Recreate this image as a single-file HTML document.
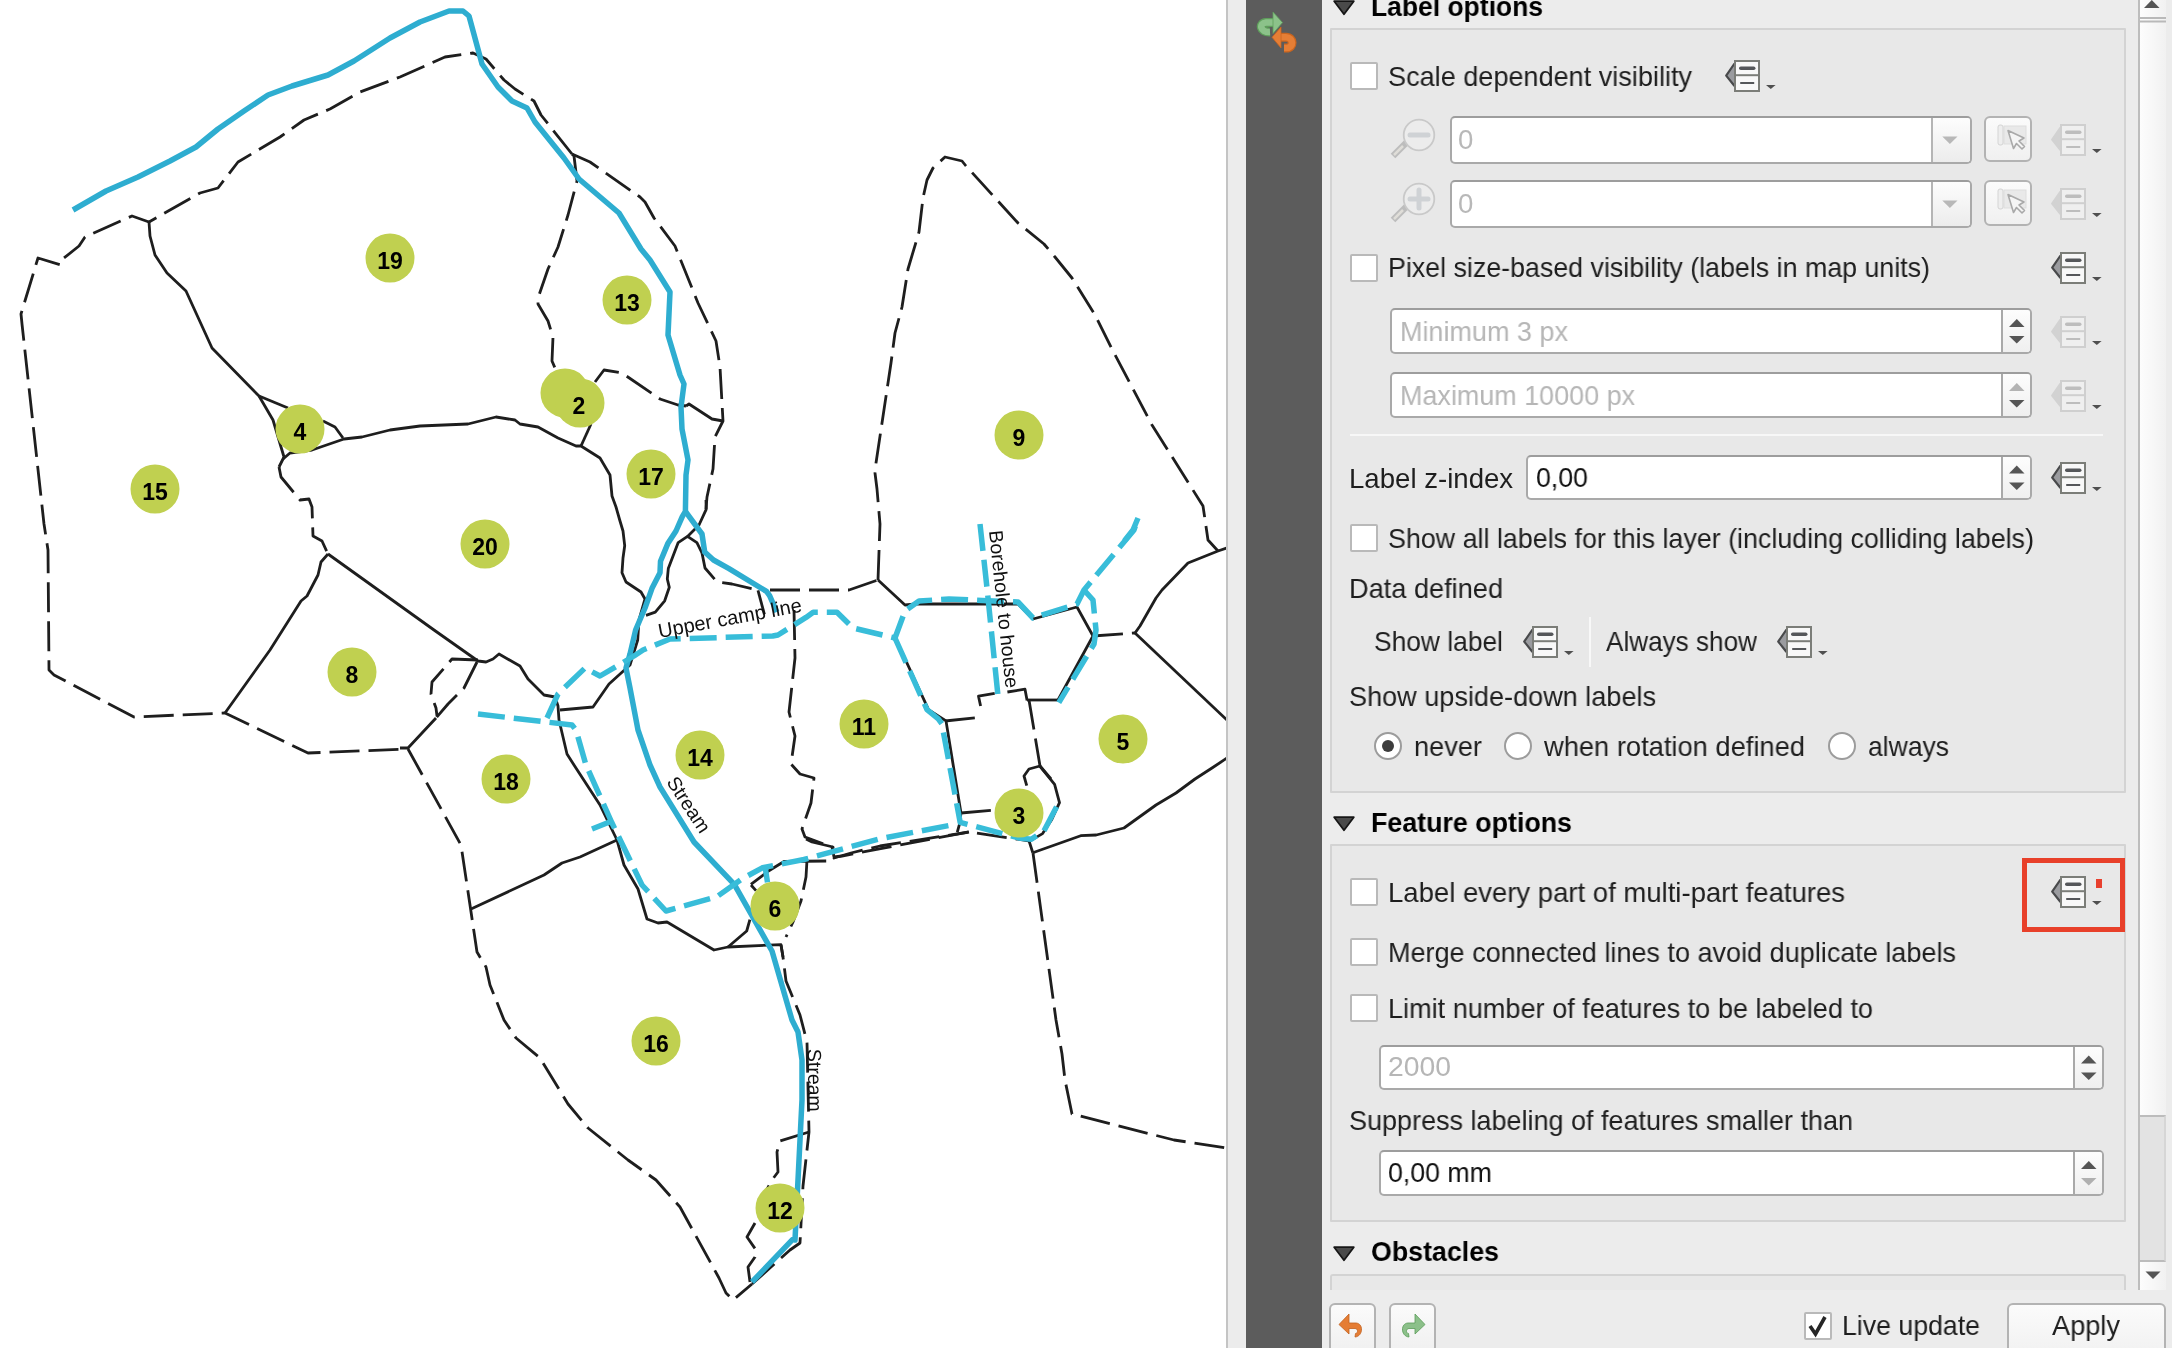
<!DOCTYPE html>
<html><head><meta charset="utf-8">
<style>
html,body{margin:0;padding:0;}
body{width:2172px;height:1348px;overflow:hidden;position:relative;background:#fff;font-family:"Liberation Sans",sans-serif;}
.t{position:absolute;white-space:nowrap;color:#1e1e1e;will-change:transform;}
.b{font-weight:bold;}
</style></head><body>
<div style="position:absolute;left:0;top:0;width:1226px;height:1348px;overflow:hidden;background:#fff">
<svg width="1226" height="1348" viewBox="0 0 1226 1348" style="position:absolute;left:0;top:0;will-change:transform">
<g fill="none" stroke="#1e1e1e" stroke-width="2.8" stroke-linejoin="round" stroke-dasharray="30 9">
<polyline points="572.0,154.0 541.0,115.0 534.0,101.0 515.0,89.0 504.0,80.0 486.0,59.0 473.0,53.0 445.0,57.0 400.0,77.0 360.0,92.0 330.0,109.0 304.0,120.0 280.0,137.0 238.0,162.0 218.0,188.0 200.0,193.0 149.0,222.0 132.0,216.0 85.0,237.0 79.0,246.0 64.0,258.0 61.0,265.0 38.0,258.0 21.0,314.0 22.0,324.0 44.0,524.0 48.0,550.0 49.0,670.0 54.0,675.0 134.0,717.0 225.0,713.0 308.0,753.0 408.0,749.0 461.0,845.0 470.0,905.0 477.0,952.0 486.0,967.0 490.0,985.0 504.0,1020.0 516.0,1038.0 540.0,1058.0 568.0,1104.0 588.0,1128.0 628.0,1160.0 656.0,1180.0 680.0,1207.0 719.0,1278.0 726.0,1293.0 733.0,1300.0 752.0,1284.0"/>
<polyline points="752.0,1284.0 790.0,1250.0 800.0,1243.0 803.0,1186.0 809.0,1132.0 807.0,1042.0 800.0,1015.0 786.0,981.0 783.0,957.0 781.0,945.0"/>
<polyline points="809.0,1132.0 780.0,1141.0 777.0,1152.0 778.0,1172.0 772.0,1180.0 764.0,1195.0"/>
<polyline points="755.0,1223.0 747.0,1237.0 756.0,1250.0 755.0,1257.0 748.0,1267.0 750.0,1282.0"/>
<polyline points="572.0,154.0 574.0,156.0 577.0,181.0 568.0,215.0 558.0,247.0 548.0,269.0 538.0,298.0 538.0,304.0 548.0,321.0 553.0,337.0 552.0,361.0 555.0,368.0 560.0,370.0"/>
<polyline points="572.0,154.0 590.0,162.0 640.0,197.0 645.0,202.0 654.0,218.0 675.0,246.0 698.0,303.0 716.0,341.0 720.0,367.0 723.0,421.0 715.0,437.0 713.0,469.0 707.0,497.0 706.0,509.0"/>
<polyline points="595.0,382.0 604.0,370.0 622.0,373.0 660.0,399.0 678.0,405.0 686.0,406.0"/>
<polyline points="878.0,580.0 880.0,524.0 877.0,489.0 875.0,473.0 876.0,463.0 891.0,363.0 895.0,333.0 902.0,307.0 908.0,269.0 919.0,232.0 923.0,198.0 927.0,180.0 933.0,168.0 945.0,157.0 962.0,161.0 966.0,166.0 1018.0,223.0 1044.0,244.0 1055.0,257.0 1072.0,278.0 1095.0,315.0 1112.0,349.0 1152.0,425.0 1203.0,506.0 1208.0,540.0 1218.0,551.0"/>
<polyline points="770.0,590.0 849.0,590.0 878.0,580.0"/>
<polyline points="702.0,553.0 705.0,568.0 717.0,582.0 732.0,584.0 758.0,590.0"/>
<polyline points="794.0,610.0 795.0,658.0 789.0,712.0 795.0,736.0 791.0,764.0 800.0,774.0 814.0,778.0 811.0,803.0 802.0,829.0 805.0,837.0 832.0,847.0 834.0,857.0 842.0,856.0 969.0,832.0 1030.0,841.0"/>
<polyline points="807.0,860.0 806.0,877.0 801.0,901.0 793.0,922.0 786.0,937.0"/>
<polyline points="1033.0,853.0 1056.0,1020.0 1062.0,1054.0 1065.0,1080.0 1072.0,1114.0 1174.0,1140.0 1227.0,1148.0"/>
<polyline points="478.0,660.0 452.0,659.0 432.0,682.0 431.0,694.0 436.0,708.0 437.0,716.0"/>
<polyline points="477.0,662.0 464.0,688.0 448.0,704.0 436.0,718.0"/>
<polyline points="279.0,467.0 281.0,477.0 300.0,500.0 309.0,499.0 312.0,507.0 313.0,536.0 322.0,541.0 328.0,554.0"/>
<polyline points="945.0,721.0 983.0,717.0"/>
<polyline points="961.0,813.0 995.0,810.0"/>
<polyline points="1027.0,700.0 1057.0,700.0"/>
<polyline points="1093.0,636.0 1135.0,633.0"/>
<polyline points="1040.0,766.0 1029.0,769.0 1024.0,776.0 1028.0,790.0"/>
<polyline points="1029.0,700.0 1040.0,766.0"/>
<polyline points="806.0,839.0 812.0,842.0 833.0,847.0 834.0,858.0 851.0,853.0 880.0,846.0 969.0,832.0"/>
</g>
<g fill="none" stroke="#1e1e1e" stroke-width="2.8" stroke-linejoin="round">
<polyline points="149.0,222.0 150.0,236.0 155.0,255.0 167.0,273.0 186.0,291.0 212.0,348.0 259.0,396.0 273.0,420.0 284.0,457.0 279.0,467.0"/>
<polyline points="259.0,396.0 288.0,408.0"/>
<polyline points="323.0,421.0 335.0,427.0 343.0,438.0"/>
<polyline points="283.0,459.0 290.0,453.0 312.0,450.0 344.0,439.0 362.0,437.0 390.0,430.0 420.0,426.0 468.0,424.0 496.0,417.0 515.0,420.0 520.0,424.0 538.0,427.0 558.0,438.0 576.0,446.0 581.0,446.0 600.0,458.0 610.0,475.0 612.0,496.0 616.0,507.0 620.0,521.0 623.0,531.0 624.7,545.7 623.0,558.0 622.0,572.7 626.0,582.0 641.0,592.0 645.0,599.0 639.0,620.0 637.7,640.0 630.0,665.0 609.0,684.0 593.0,707.0 560.0,710.0"/>
<polyline points="581.0,446.0 591.0,424.0"/>
<polyline points="328.0,554.0 434.0,630.0 478.0,661.0 486.0,662.0 493.0,659.0 499.0,654.0 520.0,666.0 528.0,679.0 544.0,695.0 555.0,697.0"/>
<polyline points="328.0,554.0 321.0,562.0 318.0,575.0 307.0,596.0 301.0,601.0 270.0,650.0 225.0,713.0"/>
<polyline points="555.0,697.0 558.0,706.0 559.0,720.0 567.0,754.0 574.0,765.0 600.0,805.0 617.0,840.0 624.0,865.0 638.0,889.0 647.0,919.0 658.0,923.0 667.0,922.0 714.0,950.0 728.0,947.0 781.0,944.6 783.0,957.0"/>
<polyline points="728.0,947.0 746.7,931.0 749.9,919.7"/>
<polyline points="646.0,615.3 655.3,612.2 664.7,600.8 669.3,587.3 667.3,579.0 668.3,568.6 678.2,542.6 687.5,536.4 696.9,542.6 702.0,553.0"/>
<polyline points="687.5,536.4 699.0,525.0 706.2,509.3 706.0,500.0"/>
<polyline points="758.0,590.4 764.4,614.3"/>
<polyline points="686.0,406.0 689.0,404.0 712.0,419.0 723.0,421.0"/>
<polyline points="471.0,909.0 544.0,875.0 562.0,863.0 580.0,857.0 617.0,840.0"/>
<polyline points="436.0,718.0 408.0,748.0 400.0,748.0"/>
<polyline points="878.0,580.0 905.0,605.0 916.0,604.0 1018.0,604.0 1033.0,619.0 1077.0,607.0 1093.0,636.0 1058.0,700.0 1057.0,700.0"/>
<polyline points="1135.0,633.0 1140.0,626.0 1156.0,598.0 1162.0,590.0 1188.0,563.0 1218.0,551.0 1227.0,548.0"/>
<polyline points="1135.0,633.0 1227.0,720.0"/>
<polyline points="894.0,635.0 928.5,709.6 946.0,720.9 960.9,812.5 960.2,821.6 957.3,832.2"/>
<polyline points="980.6,706.0 978.5,696.2 994.7,693.4"/>
<polyline points="1007.4,692.0 1025.0,689.2 1027.1,700.4"/>
<polyline points="1039.8,766.0 1054.6,784.3 1059.5,802.6 1051.8,819.5 1042.6,833.6 1029.2,841.4 1032.8,852.7"/>
<polyline points="1032.8,852.7 1080.7,835.7 1096.2,835.0 1124.0,828.0 1156.0,805.0 1176.0,793.0 1195.0,779.0 1212.0,768.0 1227.0,758.0"/>
<polyline points="751.0,885.0 756.0,890.6"/>
<polyline points="750.9,884.4 768.5,871.0 784.0,861.5 826.2,861.0"/>
<polyline points="1040.0,766.0 1051.0,779.0"/>
</g>
<g fill="none" stroke="#2eadd0" stroke-width="5.5" stroke-linejoin="round">
<polyline points="73.0,210.0 106.0,191.0 138.0,177.0 170.0,161.0 196.0,147.0 218.0,129.0 244.0,111.0 268.0,95.0 292.0,86.0 328.0,75.0 354.0,61.0 390.0,38.0 420.0,22.0 449.0,11.0 463.0,11.0 469.0,16.0 482.0,64.0 498.0,87.0 512.0,101.0 527.0,108.0 535.0,122.0 564.0,158.0 579.0,179.0 619.0,213.0 641.0,249.0 650.0,260.0 670.0,292.0 668.0,335.0 680.0,375.0 684.0,384.0 681.0,407.0 682.0,429.0 688.0,460.0 686.0,475.0 685.4,511.4 682.3,516.6 676.0,531.0 667.8,543.6 660.5,561.3 660.0,572.7 652.0,588.3 645.0,608.0 635.6,630.0 630.0,654.0 626.0,668.0 630.0,688.0 638.0,730.0 650.0,765.0 660.0,787.0 694.0,842.0 734.3,884.4 772.0,951.0 792.0,1020.0 798.0,1032.0 802.0,1060.0 802.0,1100.0 795.0,1240.0 792.7,1239.4 752.0,1282.0"/>
<polyline points="685.4,511.4 702.0,534.0 704.7,552.0 713.5,560.0 729.0,568.6 766.5,591.4 769.6,595.6 776.8,612.0"/>
</g>
<g fill="none" stroke="#38bdd9" stroke-width="5.5" stroke-linejoin="round" stroke-dasharray="27 9">
<polyline points="547.0,718.0 558.0,694.0 585.0,668.0 600.0,676.0 634.0,656.0 643.0,650.0 670.0,639.0 772.7,636.0 778.0,635.0 806.0,617.4 813.2,612.2 837.0,612.2 853.0,628.0 895.0,638.0 905.0,611.0 919.0,601.0 949.0,599.0 1018.0,602.0 1033.0,618.0 1077.0,604.0 1084.0,590.0 1134.0,530.0 1138.0,518.0"/>
<polyline points="1084.0,590.0 1093.0,600.0 1096.0,630.0 1094.0,644.0 1058.8,702.6"/>
<polyline points="895.0,638.0 927.0,709.6 938.3,718.8 941.8,723.7 960.2,822.4 1018.7,837.9 1031.3,839.3 1044.0,830.8 1058.8,802.6"/>
<polyline points="980.0,524.0 987.0,588.0 998.0,696.0"/>
<polyline points="478.0,714.0 572.0,725.0 576.0,730.0 586.0,765.0 612.0,823.0 642.0,885.0 666.0,911.0 716.6,896.9 741.5,879.2 762.3,867.8 803.9,859.5 880.0,838.7 957.0,824.0"/>
<polyline points="592.0,829.0 612.0,821.0"/>
<polyline points="1138.0,518.0 1133.0,530.0 1122.0,544.0"/>
<polyline points="765.4,868.8 767.5,882.3"/>
</g>
<g font-family="Liberation Sans, sans-serif" font-size="19.5" fill="#111">
<text transform="translate(659.5,638) rotate(-10.5)" font-size="20">Upper camp line</text>
<text transform="translate(989,531) rotate(84)">Borehole to house</text>
<text transform="translate(666,782) rotate(57)">Stream</text>
<text transform="translate(807.5,1049) rotate(89)">Stream</text>
</g>
<g fill="#c0d050">
<circle cx="565" cy="393" r="24.5"/><circle cx="580" cy="403" r="24.5"/>
<circle cx="390" cy="258" r="24.5"/>
<circle cx="627" cy="300" r="24.5"/>
<circle cx="300" cy="429" r="24.5"/>
<circle cx="155" cy="489" r="24.5"/>
<circle cx="485" cy="544" r="24.5"/>
<circle cx="651" cy="474" r="24.5"/>
<circle cx="1019" cy="435" r="24.5"/>
<circle cx="352" cy="672" r="24.5"/>
<circle cx="864" cy="724" r="24.5"/>
<circle cx="1123" cy="739" r="24.5"/>
<circle cx="700" cy="755" r="24.5"/>
<circle cx="506" cy="779" r="24.5"/>
<circle cx="1019" cy="813" r="24.5"/>
<circle cx="775" cy="906" r="24.5"/>
<circle cx="656" cy="1041" r="24.5"/>
<circle cx="780" cy="1208" r="24.5"/>
</g>
<g font-family="Liberation Sans, sans-serif" font-size="23" font-weight="bold" fill="#000" text-anchor="middle">
<text x="390" y="268.5">19</text>
<text x="627" y="310.5">13</text>
<text x="300" y="439.5">4</text>
<text x="155" y="499.5">15</text>
<text x="485" y="554.5">20</text>
<text x="651" y="484.5">17</text>
<text x="1019" y="445.5">9</text>
<text x="352" y="682.5">8</text>
<text x="864" y="734.5">11</text>
<text x="1123" y="749.5">5</text>
<text x="700" y="765.5">14</text>
<text x="506" y="789.5">18</text>
<text x="1019" y="823.5">3</text>
<text x="775" y="916.5">6</text>
<text x="656" y="1051.5">16</text>
<text x="780" y="1218.5">12</text>
<text x="579" y="414">2</text>
</g>
</svg>
</div>
<div style="position:absolute;left:1226px;top:0px;width:2px;height:1348px;box-sizing:border-box;background:#c4c4c4;"></div>
<div style="position:absolute;left:1228px;top:0px;width:18px;height:1348px;box-sizing:border-box;background:#ececec;"></div>
<div style="position:absolute;left:1246px;top:0px;width:76px;height:1348px;box-sizing:border-box;background:#5c5c5c;"></div>
<div style="position:absolute;left:1322px;top:0px;width:850px;height:1348px;box-sizing:border-box;background:#ececec;"></div>
<svg style="position:absolute;left:1246px;top:0px" width="76" height="60" viewBox="1246 0 76 60">
<path d="M1270,32 C1260,32.5 1258.5,23 1266,22.5 L1274,22.5" fill="none" stroke="#5f9e5c" stroke-width="9" stroke-linecap="butt"/>
<path d="M1270,32 C1260,32.5 1258.5,23 1266,22.5 L1274,22.5" fill="none" stroke="#8cc28a" stroke-width="6.6" stroke-linecap="butt"/>
<path d="M1273,12 L1282.5,22.6 L1273,33.5 Z" fill="#8cc28a" stroke="#5f9e5c" stroke-width="0.8"/>
<path d="M1280,37.3 L1286,37.3 C1294,37.3 1294,48 1286.5,48 L1284,48" fill="none" stroke="#c9651f" stroke-width="9"/>
<path d="M1280,37.3 L1286,37.3 C1294,37.3 1294,48 1286.5,48 L1284,48" fill="none" stroke="#e57e35" stroke-width="6.6"/>
<path d="M1281,27 L1272,37.3 L1281,48 Z" fill="#e57e35" stroke="#c9651f" stroke-width="0.8"/>
</svg>
<svg style="position:absolute;left:1333px;top:0px" width="22" height="16"><path d="M1.2 1.2 L20.8 1.2 L11 14.2Z" fill="#4a4a4a" stroke="#161616" stroke-width="1.8" stroke-linejoin="round"/></svg>
<div class="t b" style="left:1370.5px;top:-7.4px;font-size:27.6px;line-height:27.6px;transform:scaleX(0.9590);transform-origin:0 0;color:#000;">Label options</div>
<div style="position:absolute;left:1330px;top:28px;width:796px;height:765px;box-sizing:border-box;background:#e8e8e8;border:2px solid #d3d3d3;border-radius:1px;"></div>
<div style="position:absolute;left:1350px;top:62px;width:28px;height:28px;box-sizing:border-box;background:#fff;border:2px solid #b9b9b9;border-radius:2px;"></div>
<div class="t" style="left:1387.5px;top:62.6px;font-size:27.6px;line-height:27.6px;transform:scaleX(0.9811);transform-origin:0 0;">Scale dependent visibility</div>
<svg style="position:absolute;left:1724.5px;top:60px" width="54" height="34" viewBox="0 0 54 34">
<path d="M9.5 3.5 L1.2 15.6 L9.5 26" fill="#9a9b9f" stroke="#48494b" stroke-width="2.2" stroke-linejoin="round"/>
<rect x="10" y="1" width="24" height="30" fill="#f8f8f8" stroke="#7b7d78" stroke-width="2"/>
<line x1="10" y1="15.2" x2="34" y2="15.2" stroke="#7b7d78" stroke-width="2"/>
<line x1="15.8" y1="8.2" x2="28.7" y2="8.2" stroke="#55575a" stroke-width="3.6" stroke-linecap="round"/>
<line x1="15.2" y1="23" x2="29.2" y2="23" stroke="#55575a" stroke-width="2"/>
<path d="M41 25 L50.6 25 L45.8 29" fill="#4f4f4f"/>
</svg>
<svg style="position:absolute;left:1388px;top:113px" width="50" height="52" viewBox="0 0 50 52">
<line x1="5" y1="43" x2="20" y2="28" stroke="#bdbdbd" stroke-width="6.5"/>
<line x1="6" y1="42" x2="15" y2="33" stroke="#dfddd8" stroke-width="2.5"/>
<circle cx="31" cy="22" r="15.3" fill="#ececec" stroke="#c9c9c9" stroke-width="1.8"/>
<line x1="22" y1="22" x2="40" y2="22" stroke="#cfd2d5" stroke-width="5" stroke-linecap="round"/>
</svg>
<svg style="position:absolute;left:1388px;top:177px" width="50" height="52" viewBox="0 0 50 52">
<line x1="5" y1="43" x2="20" y2="28" stroke="#bdbdbd" stroke-width="6.5"/>
<line x1="6" y1="42" x2="15" y2="33" stroke="#dfddd8" stroke-width="2.5"/>
<circle cx="31" cy="22" r="15.3" fill="#ececec" stroke="#c9c9c9" stroke-width="1.8"/>
<line x1="22" y1="22" x2="40" y2="22" stroke="#cfd2d5" stroke-width="5" stroke-linecap="round"/>
<line x1="31" y1="13" x2="31" y2="31" stroke="#cfd2d5" stroke-width="5" stroke-linecap="round"/></svg>
<div style="position:absolute;left:1450px;top:116px;width:522px;height:48px;box-sizing:border-box;background:#fff;border:2px solid #a9a9a9;border-top-color:#9d9d9d;border-radius:5px;"></div>
<div style="position:absolute;left:1931px;top:118px;width:39px;height:44px;box-sizing:border-box;background:linear-gradient(#fdfdfd,#ececec);border-radius:0 3px 3px 0;"></div>
<div style="position:absolute;left:1931px;top:118px;width:1.5px;height:44px;box-sizing:border-box;background:#b5b5b5;"></div>
<svg style="position:absolute;left:1931px;top:116px" width="41" height="48"><path d="M11.3 20.5 L26.5 20.5 L18.9 28.0Z" fill="#b8b8b8"/></svg>
<div class="t" style="left:1457.5px;top:125.6px;font-size:27.6px;line-height:27.6px;transform:scaleX(0.9850);transform-origin:0 0;color:#b8b8b8;">0</div>
<div style="position:absolute;left:1450px;top:180px;width:522px;height:48px;box-sizing:border-box;background:#fff;border:2px solid #a9a9a9;border-top-color:#9d9d9d;border-radius:5px;"></div>
<div style="position:absolute;left:1931px;top:182px;width:39px;height:44px;box-sizing:border-box;background:linear-gradient(#fdfdfd,#ececec);border-radius:0 3px 3px 0;"></div>
<div style="position:absolute;left:1931px;top:182px;width:1.5px;height:44px;box-sizing:border-box;background:#b5b5b5;"></div>
<svg style="position:absolute;left:1931px;top:180px" width="41" height="48"><path d="M11.3 20.5 L26.5 20.5 L18.9 28.0Z" fill="#b8b8b8"/></svg>
<div class="t" style="left:1457.5px;top:189.6px;font-size:27.6px;line-height:27.6px;transform:scaleX(0.9850);transform-origin:0 0;color:#b8b8b8;">0</div>
<div style="position:absolute;left:1984px;top:116px;width:48px;height:46px;box-sizing:border-box;background:linear-gradient(#fbfbfb,#f0f0f0);border:2px solid #b3b3b3;border-radius:6px;"></div>
<svg style="position:absolute;left:1984px;top:116px" width="48" height="46" viewBox="0 0 48 46">
<rect x="20" y="10" width="22" height="18" fill="#e9e9e9" stroke="#dddddd" stroke-width="1"/>
<rect x="14" y="9" width="5" height="20" rx="2" fill="#eeeeee" stroke="#d4d4d4" stroke-width="1"/>
<path d="M24 14.5 L29.5 32.5 L32.5 27.5 L38 33 L40.5 30.5 L35 25 L40 22Z" fill="#f5f5f5" stroke="#a9a9a9" stroke-width="1.6" stroke-linejoin="round"/>
</svg>
<svg style="position:absolute;left:2050.5px;top:124px" width="54" height="34" viewBox="0 0 54 34">
<path d="M9.5 3.5 L1.2 15.6 L9.5 26" fill="#d2d2d2" stroke="#d2d2d2" stroke-width="2.2" stroke-linejoin="round"/>
<rect x="10" y="1" width="24" height="30" fill="#efefef" stroke="#cfcfcf" stroke-width="2"/>
<line x1="10" y1="15.2" x2="34" y2="15.2" stroke="#cfcfcf" stroke-width="2"/>
<line x1="15.8" y1="8.2" x2="28.7" y2="8.2" stroke="#bdbdbd" stroke-width="3.6" stroke-linecap="round"/>
<line x1="15.2" y1="23" x2="29.2" y2="23" stroke="#bdbdbd" stroke-width="2"/>
<path d="M41 25 L50.6 25 L45.8 29" fill="#4f4f4f"/>
</svg>
<div style="position:absolute;left:1984px;top:180px;width:48px;height:46px;box-sizing:border-box;background:linear-gradient(#fbfbfb,#f0f0f0);border:2px solid #b3b3b3;border-radius:6px;"></div>
<svg style="position:absolute;left:1984px;top:180px" width="48" height="46" viewBox="0 0 48 46">
<rect x="20" y="10" width="22" height="18" fill="#e9e9e9" stroke="#dddddd" stroke-width="1"/>
<rect x="14" y="9" width="5" height="20" rx="2" fill="#eeeeee" stroke="#d4d4d4" stroke-width="1"/>
<path d="M24 14.5 L29.5 32.5 L32.5 27.5 L38 33 L40.5 30.5 L35 25 L40 22Z" fill="#f5f5f5" stroke="#a9a9a9" stroke-width="1.6" stroke-linejoin="round"/>
</svg>
<svg style="position:absolute;left:2050.5px;top:188px" width="54" height="34" viewBox="0 0 54 34">
<path d="M9.5 3.5 L1.2 15.6 L9.5 26" fill="#d2d2d2" stroke="#d2d2d2" stroke-width="2.2" stroke-linejoin="round"/>
<rect x="10" y="1" width="24" height="30" fill="#efefef" stroke="#cfcfcf" stroke-width="2"/>
<line x1="10" y1="15.2" x2="34" y2="15.2" stroke="#cfcfcf" stroke-width="2"/>
<line x1="15.8" y1="8.2" x2="28.7" y2="8.2" stroke="#bdbdbd" stroke-width="3.6" stroke-linecap="round"/>
<line x1="15.2" y1="23" x2="29.2" y2="23" stroke="#bdbdbd" stroke-width="2"/>
<path d="M41 25 L50.6 25 L45.8 29" fill="#4f4f4f"/>
</svg>
<div style="position:absolute;left:1350px;top:254px;width:28px;height:28px;box-sizing:border-box;background:#fff;border:2px solid #b9b9b9;border-radius:2px;"></div>
<div class="t" style="left:1387.5px;top:253.6px;font-size:27.6px;line-height:27.6px;transform:scaleX(0.9709);transform-origin:0 0;">Pixel size-based visibility (labels in map units)</div>
<svg style="position:absolute;left:2050.5px;top:252px" width="54" height="34" viewBox="0 0 54 34">
<path d="M9.5 3.5 L1.2 15.6 L9.5 26" fill="#9a9b9f" stroke="#48494b" stroke-width="2.2" stroke-linejoin="round"/>
<rect x="10" y="1" width="24" height="30" fill="#f8f8f8" stroke="#7b7d78" stroke-width="2"/>
<line x1="10" y1="15.2" x2="34" y2="15.2" stroke="#7b7d78" stroke-width="2"/>
<line x1="15.8" y1="8.2" x2="28.7" y2="8.2" stroke="#55575a" stroke-width="3.6" stroke-linecap="round"/>
<line x1="15.2" y1="23" x2="29.2" y2="23" stroke="#55575a" stroke-width="2"/>
<path d="M41 25 L50.6 25 L45.8 29" fill="#4f4f4f"/>
</svg>
<div style="position:absolute;left:1390px;top:308px;width:642px;height:46px;box-sizing:border-box;background:#fff;border:2px solid #a9a9a9;border-top-color:#9d9d9d;border-radius:5px;"></div>
<div style="position:absolute;left:2002px;top:310px;width:28px;height:42px;box-sizing:border-box;background:linear-gradient(#fdfdfd,#efefef);border-radius:0 3px 3px 0;"></div>
<div style="position:absolute;left:2001px;top:310px;width:2px;height:42px;box-sizing:border-box;background:#a9a9a9;"></div>
<svg style="position:absolute;left:2002px;top:308px" width="30" height="46"><path d="M7 19.0 L22.5 19.0 L14.75 11.0Z" fill="#555"/><path d="M7 28.0 L22.5 28.0 L14.75 35.6Z" fill="#555"/></svg>
<div class="t" style="left:1399.5px;top:317.6px;font-size:27.6px;line-height:27.6px;transform:scaleX(0.9783);transform-origin:0 0;color:#b6b6b6;">Minimum 3 px</div>
<svg style="position:absolute;left:2050.5px;top:316px" width="54" height="34" viewBox="0 0 54 34">
<path d="M9.5 3.5 L1.2 15.6 L9.5 26" fill="#d2d2d2" stroke="#d2d2d2" stroke-width="2.2" stroke-linejoin="round"/>
<rect x="10" y="1" width="24" height="30" fill="#efefef" stroke="#cfcfcf" stroke-width="2"/>
<line x1="10" y1="15.2" x2="34" y2="15.2" stroke="#cfcfcf" stroke-width="2"/>
<line x1="15.8" y1="8.2" x2="28.7" y2="8.2" stroke="#bdbdbd" stroke-width="3.6" stroke-linecap="round"/>
<line x1="15.2" y1="23" x2="29.2" y2="23" stroke="#bdbdbd" stroke-width="2"/>
<path d="M41 25 L50.6 25 L45.8 29" fill="#4f4f4f"/>
</svg>
<div style="position:absolute;left:1390px;top:372px;width:642px;height:46px;box-sizing:border-box;background:#fff;border:2px solid #a9a9a9;border-top-color:#9d9d9d;border-radius:5px;"></div>
<div style="position:absolute;left:2002px;top:374px;width:28px;height:42px;box-sizing:border-box;background:linear-gradient(#fdfdfd,#efefef);border-radius:0 3px 3px 0;"></div>
<div style="position:absolute;left:2001px;top:374px;width:2px;height:42px;box-sizing:border-box;background:#a9a9a9;"></div>
<svg style="position:absolute;left:2002px;top:372px" width="30" height="46"><path d="M7 19.0 L22.5 19.0 L14.75 11.0Z" fill="#b3b3b3"/><path d="M7 28.0 L22.5 28.0 L14.75 35.6Z" fill="#555"/></svg>
<div class="t" style="left:1399.5px;top:381.6px;font-size:27.6px;line-height:27.6px;transform:scaleX(0.9760);transform-origin:0 0;color:#b6b6b6;">Maximum 10000 px</div>
<svg style="position:absolute;left:2050.5px;top:380px" width="54" height="34" viewBox="0 0 54 34">
<path d="M9.5 3.5 L1.2 15.6 L9.5 26" fill="#d2d2d2" stroke="#d2d2d2" stroke-width="2.2" stroke-linejoin="round"/>
<rect x="10" y="1" width="24" height="30" fill="#efefef" stroke="#cfcfcf" stroke-width="2"/>
<line x1="10" y1="15.2" x2="34" y2="15.2" stroke="#cfcfcf" stroke-width="2"/>
<line x1="15.8" y1="8.2" x2="28.7" y2="8.2" stroke="#bdbdbd" stroke-width="3.6" stroke-linecap="round"/>
<line x1="15.2" y1="23" x2="29.2" y2="23" stroke="#bdbdbd" stroke-width="2"/>
<path d="M41 25 L50.6 25 L45.8 29" fill="#4f4f4f"/>
</svg>
<div style="position:absolute;left:1350px;top:434px;width:753px;height:2px;box-sizing:border-box;background:#f7f7f7;"></div>
<div class="t" style="left:1348.5px;top:464.6px;font-size:27.6px;line-height:27.6px;transform:scaleX(0.9992);transform-origin:0 0;">Label z-index</div>
<div style="position:absolute;left:1526px;top:455px;width:506px;height:45px;box-sizing:border-box;background:#fff;border:2px solid #a9a9a9;border-top-color:#9d9d9d;border-radius:5px;"></div>
<div style="position:absolute;left:2002px;top:457px;width:28px;height:41px;box-sizing:border-box;background:linear-gradient(#fdfdfd,#efefef);border-radius:0 3px 3px 0;"></div>
<div style="position:absolute;left:2001px;top:457px;width:2px;height:41px;box-sizing:border-box;background:#a9a9a9;"></div>
<svg style="position:absolute;left:2002px;top:455px" width="30" height="45"><path d="M7 18.5 L22.5 18.5 L14.75 10.5Z" fill="#555"/><path d="M7 27.5 L22.5 27.5 L14.75 35.1Z" fill="#555"/></svg>
<div class="t" style="left:1535.5px;top:463.6px;font-size:27.6px;line-height:27.6px;transform:scaleX(0.9682);transform-origin:0 0;color:#111;">0,00</div>
<svg style="position:absolute;left:2050.5px;top:462px" width="54" height="34" viewBox="0 0 54 34">
<path d="M9.5 3.5 L1.2 15.6 L9.5 26" fill="#9a9b9f" stroke="#48494b" stroke-width="2.2" stroke-linejoin="round"/>
<rect x="10" y="1" width="24" height="30" fill="#f8f8f8" stroke="#7b7d78" stroke-width="2"/>
<line x1="10" y1="15.2" x2="34" y2="15.2" stroke="#7b7d78" stroke-width="2"/>
<line x1="15.8" y1="8.2" x2="28.7" y2="8.2" stroke="#55575a" stroke-width="3.6" stroke-linecap="round"/>
<line x1="15.2" y1="23" x2="29.2" y2="23" stroke="#55575a" stroke-width="2"/>
<path d="M41 25 L50.6 25 L45.8 29" fill="#4f4f4f"/>
</svg>
<div style="position:absolute;left:1350px;top:524px;width:28px;height:28px;box-sizing:border-box;background:#fff;border:2px solid #b9b9b9;border-radius:2px;"></div>
<div class="t" style="left:1387.5px;top:524.6px;font-size:27.6px;line-height:27.6px;transform:scaleX(0.9727);transform-origin:0 0;">Show all labels for this layer (including colliding labels)</div>
<div class="t" style="left:1348.5px;top:574.6px;font-size:27.6px;line-height:27.6px;transform:scaleX(0.9841);transform-origin:0 0;">Data defined</div>
<div class="t" style="left:1373.5px;top:627.6px;font-size:27.6px;line-height:27.6px;transform:scaleX(0.9556);transform-origin:0 0;">Show label</div>
<svg style="position:absolute;left:1522.5px;top:626px" width="54" height="34" viewBox="0 0 54 34">
<path d="M9.5 3.5 L1.2 15.6 L9.5 26" fill="#9a9b9f" stroke="#48494b" stroke-width="2.2" stroke-linejoin="round"/>
<rect x="10" y="1" width="24" height="30" fill="#f8f8f8" stroke="#7b7d78" stroke-width="2"/>
<line x1="10" y1="15.2" x2="34" y2="15.2" stroke="#7b7d78" stroke-width="2"/>
<line x1="15.8" y1="8.2" x2="28.7" y2="8.2" stroke="#55575a" stroke-width="3.6" stroke-linecap="round"/>
<line x1="15.2" y1="23" x2="29.2" y2="23" stroke="#55575a" stroke-width="2"/>
<path d="M41 25 L50.6 25 L45.8 29" fill="#4f4f4f"/>
</svg>
<div style="position:absolute;left:1588.5px;top:617px;width:2px;height:50px;box-sizing:border-box;background:#f8f8f8;"></div>
<div class="t" style="left:1605.5px;top:627.6px;font-size:27.6px;line-height:27.6px;transform:scaleX(0.9468);transform-origin:0 0;">Always show</div>
<svg style="position:absolute;left:1776.5px;top:626px" width="54" height="34" viewBox="0 0 54 34">
<path d="M9.5 3.5 L1.2 15.6 L9.5 26" fill="#9a9b9f" stroke="#48494b" stroke-width="2.2" stroke-linejoin="round"/>
<rect x="10" y="1" width="24" height="30" fill="#f8f8f8" stroke="#7b7d78" stroke-width="2"/>
<line x1="10" y1="15.2" x2="34" y2="15.2" stroke="#7b7d78" stroke-width="2"/>
<line x1="15.8" y1="8.2" x2="28.7" y2="8.2" stroke="#55575a" stroke-width="3.6" stroke-linecap="round"/>
<line x1="15.2" y1="23" x2="29.2" y2="23" stroke="#55575a" stroke-width="2"/>
<path d="M41 25 L50.6 25 L45.8 29" fill="#4f4f4f"/>
</svg>
<div class="t" style="left:1348.5px;top:682.6px;font-size:27.6px;line-height:27.6px;transform:scaleX(0.9811);transform-origin:0 0;">Show upside-down labels</div>
<svg style="position:absolute;left:1373px;top:731px" width="30" height="30"><circle cx="15" cy="15" r="13" fill="#fff" stroke="#9c9c9c" stroke-width="2"/><circle cx="15" cy="15" r="6" fill="#3d3d3d"/></svg>
<div class="t" style="left:1413.5px;top:732.6px;font-size:27.6px;line-height:27.6px;transform:scaleX(0.9852);transform-origin:0 0;">never</div>
<svg style="position:absolute;left:1503px;top:731px" width="30" height="30"><circle cx="15" cy="15" r="13" fill="#fff" stroke="#9c9c9c" stroke-width="2"/></svg>
<div class="t" style="left:1543.5px;top:732.6px;font-size:27.6px;line-height:27.6px;transform:scaleX(0.9891);transform-origin:0 0;">when rotation defined</div>
<svg style="position:absolute;left:1827px;top:731px" width="30" height="30"><circle cx="15" cy="15" r="13" fill="#fff" stroke="#9c9c9c" stroke-width="2"/></svg>
<div class="t" style="left:1867.5px;top:732.6px;font-size:27.6px;line-height:27.6px;transform:scaleX(0.9604);transform-origin:0 0;">always</div>
<svg style="position:absolute;left:1333px;top:816px" width="22" height="16"><path d="M1.2 1.2 L20.8 1.2 L11 14.2Z" fill="#4a4a4a" stroke="#161616" stroke-width="1.8" stroke-linejoin="round"/></svg>
<div class="t b" style="left:1370.5px;top:808.6px;font-size:27.6px;line-height:27.6px;transform:scaleX(0.9712);transform-origin:0 0;color:#000;">Feature options</div>
<div style="position:absolute;left:1330px;top:844px;width:796px;height:378px;box-sizing:border-box;background:#e8e8e8;border:2px solid #d3d3d3;border-radius:1px;"></div>
<div style="position:absolute;left:1350px;top:878px;width:28px;height:28px;box-sizing:border-box;background:#fff;border:2px solid #b9b9b9;border-radius:2px;"></div>
<div class="t" style="left:1387.5px;top:878.6px;font-size:27.6px;line-height:27.6px;transform:scaleX(0.9965);transform-origin:0 0;">Label every part of multi-part features</div>
<svg style="position:absolute;left:2050.5px;top:876px" width="54" height="34" viewBox="0 0 54 34">
<path d="M9.5 3.5 L1.2 15.6 L9.5 26" fill="#9a9b9f" stroke="#48494b" stroke-width="2.2" stroke-linejoin="round"/>
<rect x="10" y="1" width="24" height="30" fill="#f8f8f8" stroke="#7b7d78" stroke-width="2"/>
<line x1="10" y1="15.2" x2="34" y2="15.2" stroke="#7b7d78" stroke-width="2"/>
<line x1="15.8" y1="8.2" x2="28.7" y2="8.2" stroke="#55575a" stroke-width="3.6" stroke-linecap="round"/>
<line x1="15.2" y1="23" x2="29.2" y2="23" stroke="#55575a" stroke-width="2"/>
<path d="M41 25 L50.6 25 L45.8 29" fill="#4f4f4f"/>
</svg>
<div style="position:absolute;left:2095.5px;top:879px;width:6px;height:9px;background:#e8402e"></div>
<div style="position:absolute;left:2021.5px;top:857.5px;width:103.5px;height:74.5px;box-sizing:border-box;border:5px solid #e8402a;"></div>
<div style="position:absolute;left:1350px;top:938px;width:28px;height:28px;box-sizing:border-box;background:#fff;border:2px solid #b9b9b9;border-radius:2px;"></div>
<div class="t" style="left:1387.5px;top:938.6px;font-size:27.6px;line-height:27.6px;transform:scaleX(0.9796);transform-origin:0 0;">Merge connected lines to avoid duplicate labels</div>
<div style="position:absolute;left:1350px;top:994px;width:28px;height:28px;box-sizing:border-box;background:#fff;border:2px solid #b9b9b9;border-radius:2px;"></div>
<div class="t" style="left:1387.5px;top:994.6px;font-size:27.6px;line-height:27.6px;transform:scaleX(0.9820);transform-origin:0 0;">Limit number of features to be labeled to</div>
<div style="position:absolute;left:1378.5px;top:1044.5px;width:725px;height:45px;box-sizing:border-box;background:#fff;border:2px solid #a9a9a9;border-top-color:#9d9d9d;border-radius:5px;"></div>
<div style="position:absolute;left:2073.5px;top:1046.5px;width:28px;height:41px;box-sizing:border-box;background:linear-gradient(#fdfdfd,#efefef);border-radius:0 3px 3px 0;"></div>
<div style="position:absolute;left:2072.5px;top:1046.5px;width:2px;height:41px;box-sizing:border-box;background:#a9a9a9;"></div>
<svg style="position:absolute;left:2073.5px;top:1044.5px" width="30" height="45"><path d="M7 18.5 L22.5 18.5 L14.75 10.5Z" fill="#555"/><path d="M7 27.5 L22.5 27.5 L14.75 35.1Z" fill="#555"/></svg>
<div class="t" style="left:1387.5px;top:1052.6px;font-size:27.6px;line-height:27.6px;transform:scaleX(1.0263);transform-origin:0 0;color:#b6b6b6;">2000</div>
<div class="t" style="left:1348.5px;top:1106.6px;font-size:27.6px;line-height:27.6px;transform:scaleX(0.9779);transform-origin:0 0;">Suppress labeling of features smaller than</div>
<div style="position:absolute;left:1378.5px;top:1150px;width:725px;height:46px;box-sizing:border-box;background:#fff;border:2px solid #a9a9a9;border-top-color:#9d9d9d;border-radius:5px;"></div>
<div style="position:absolute;left:2073.5px;top:1152px;width:28px;height:42px;box-sizing:border-box;background:linear-gradient(#fdfdfd,#efefef);border-radius:0 3px 3px 0;"></div>
<div style="position:absolute;left:2072.5px;top:1152px;width:2px;height:42px;box-sizing:border-box;background:#a9a9a9;"></div>
<svg style="position:absolute;left:2073.5px;top:1150px" width="30" height="46"><path d="M7 19.0 L22.5 19.0 L14.75 11.0Z" fill="#555"/><path d="M7 28.0 L22.5 28.0 L14.75 35.6Z" fill="#b0b0b0"/></svg>
<div class="t" style="left:1387.5px;top:1158.6px;font-size:27.6px;line-height:27.6px;transform:scaleX(0.9689);transform-origin:0 0;color:#111;">0,00 mm</div>
<svg style="position:absolute;left:1333px;top:1246px" width="22" height="16"><path d="M1.2 1.2 L20.8 1.2 L11 14.2Z" fill="#4a4a4a" stroke="#161616" stroke-width="1.8" stroke-linejoin="round"/></svg>
<div class="t b" style="left:1370.5px;top:1237.6px;font-size:27.6px;line-height:27.6px;transform:scaleX(0.9704);transform-origin:0 0;color:#000;">Obstacles</div>
<div style="position:absolute;left:1330px;top:1274px;width:796px;height:30px;box-sizing:border-box;background:#e8e8e8;border:2px solid #d3d3d3;border-bottom:none;border-radius:3px 3px 0 0;"></div>
<div style="position:absolute;left:1322px;top:1290px;width:850px;height:58px;box-sizing:border-box;background:#ececec;"></div>
<div style="position:absolute;left:2138px;top:0px;width:2px;height:1290px;box-sizing:border-box;background:#bdbdbd;"></div>
<div style="position:absolute;left:2140px;top:0px;width:26px;height:1290px;box-sizing:border-box;background:linear-gradient(90deg,#fdfdfd,#f1f1f1);"></div>
<svg style="position:absolute;left:2140px;top:0" width="26" height="30"><path d="M4 8 L19.5 8 L11.75 0Z" fill="#555"/><rect x="0" y="17" width="26" height="2" fill="#b9b9b9"/><rect x="0" y="20.5" width="26" height="2" fill="#b9b9b9"/></svg>
<div style="position:absolute;left:2140px;top:1115px;width:26px;height:147px;box-sizing:border-box;background:#e3e3e3;border-top:2px solid #bcbcbc;border-bottom:2px solid #bcbcbc;border-right:2px solid #d6d6d6;"></div>
<svg style="position:absolute;left:2140px;top:1262px" width="26" height="28"><path d="M5.5 9.5 L20.5 9.5 L13 17Z" fill="#555"/></svg>
<div style="position:absolute;left:1328.5px;top:1302.5px;width:47px;height:50px;box-sizing:border-box;background:linear-gradient(#fbfbfb,#f0f0f0);border:2px solid #b3b3b3;border-radius:6px;"></div>
<div style="position:absolute;left:1388.5px;top:1302.5px;width:47px;height:50px;box-sizing:border-box;background:linear-gradient(#fbfbfb,#f0f0f0);border:2px solid #b3b3b3;border-radius:6px;"></div>
<svg style="position:absolute;left:1328px;top:1302px" width="48" height="46" viewBox="0 0 48 46">
<path d="M21 12 L11 22.5 L21 32 L21 26.5 L27 26.5 C30 26.5 30.5 31 27.5 31.5 L27 35 C35 34.5 36 21.5 28 21 L21 21Z" fill="#e57d34" stroke="#c2621f" stroke-width="0.8"/></svg>
<svg style="position:absolute;left:1388px;top:1302px" width="48" height="46" viewBox="0 0 48 46">
<path d="M27 12 L37 22.5 L27 32 L27 26.5 L21 26.5 C18 26.5 17.5 31 20.5 31.5 L21 35 C13 34.5 12 21.5 20 21 L27 21Z" fill="#8cc08a" stroke="#5a9c58" stroke-width="0.8"/></svg>
<div style="position:absolute;left:1804px;top:1312px;width:28px;height:28px;box-sizing:border-box;background:#fff;border:2px solid #b9b9b9;border-radius:2px;"></div>
<svg style="position:absolute;left:1804px;top:1312px" width="28" height="28"><path d="M6 14 L11.5 22 L21 5" fill="none" stroke="#262626" stroke-width="3.6" stroke-linejoin="miter"/></svg>
<div class="t" style="left:1841.5px;top:1311.6px;font-size:27.6px;line-height:27.6px;transform:scaleX(0.9672);transform-origin:0 0;">Live update</div>
<div style="position:absolute;left:2006.5px;top:1303px;width:159px;height:60px;box-sizing:border-box;background:linear-gradient(#fbfbfb,#f0f0f0);border:2px solid #b3b3b3;border-radius:6px;"></div>
<div class="t" style="left:2051.5px;top:1311.6px;font-size:27.6px;line-height:27.6px;transform:scaleX(0.9852);transform-origin:0 0;">Apply</div>
</body></html>
